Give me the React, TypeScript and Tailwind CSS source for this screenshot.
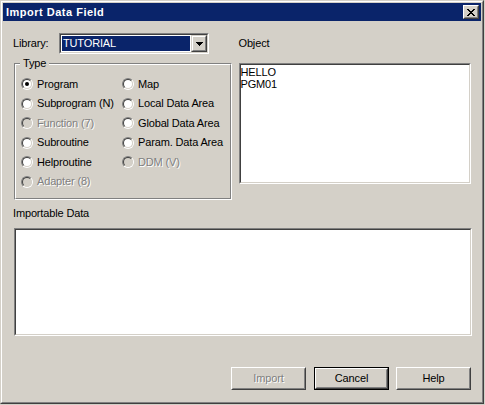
import React from 'react'

const raisedOuter = 'border border-t-white border-l-white border-r-[#404040] border-b-[#404040]'
const raisedInner = 'border border-t-[#d4d0c8] border-l-[#d4d0c8] border-r-[#808080] border-b-[#808080]'
const sunkenOuter = 'border border-t-[#808080] border-l-[#808080] border-r-white border-b-white'
const sunkenInner = 'border border-t-[#404040] border-l-[#404040] border-r-[#d4d0c8] border-b-[#d4d0c8]'
const disabledText = 'text-[#808080] [text-shadow:1px_1px_0_#ffffff]'

function Radio({ label, checked, disabled }: { label?: string; checked?: boolean; disabled?: boolean }) {
  if (!label) return <div />
  return (
    <div className="flex items-center gap-[4px]">
      <span className={`w-[12px] h-[12px] rounded-full flex ${sunkenOuter}`}>
        <span
          className={`w-full h-full rounded-full flex items-center justify-center ${sunkenInner} ${
            disabled ? 'bg-[#d4d0c8]' : 'bg-white'
          }`}
        >
          {checked && <span className="w-[4px] h-[4px] rounded-full bg-black" />}
        </span>
      </span>
      <span className={disabled ? disabledText : ''}>{label}</span>
    </div>
  )
}

function Button({ label, disabled, isDefault, className }: { label: string; disabled?: boolean; isDefault?: boolean; className?: string }) {
  if (isDefault) {
    return (
      <div className={`w-[75px] h-[23px] border border-black ${className ?? ''}`}>
        <div className={`h-full ${raisedOuter}`}>
          <div className={`h-full flex items-center justify-center ${raisedInner}`}>{label}</div>
        </div>
      </div>
    )
  }
  return (
    <div className={`w-[75px] h-[23px] ${raisedOuter} ${className ?? ''}`}>
      <div className={`h-full flex items-center justify-center ${raisedInner}`}>
        <span className={disabled ? disabledText : ''}>{label}</span>
      </div>
    </div>
  )
}

const CloseGlyph = () => (
  <svg width="8" height="7" viewBox="0 0 8 7" shapeRendering="crispEdges">
    <path
      fill="#000"
      d="M0 0h2v1H0zM6 0h2v1H6zM1 1h2v1H1zM5 1h2v1H5zM2 2h4v1H2zM3 3h2v1H3zM2 4h4v1H2zM1 5h2v1H1zM5 5h2v1H5zM0 6h2v1H0zM6 6h2v1H6z"
    />
  </svg>
)

const ArrowGlyph = () => (
  <svg width="7" height="4" viewBox="0 0 7 4" shapeRendering="crispEdges">
    <path fill="#000" d="M0 0h7v1H0zM1 1h5v1H1zM2 2h3v1H2zM3 3h1v1H3z" />
  </svg>
)

const tipos = [
  ['Program', 'Map'],
  ['Subprogram (N)', 'Local Data Area'],
  ['Function (7)', 'Global Data Area'],
  ['Subroutine', 'Param. Data Area'],
  ['Helproutine', 'DDM (V)'],
  ['Adapter (8)', ''],
]
const deshabilitados = ['Function (7)', 'DDM (V)', 'Adapter (8)']

export default function App() {
  return (
    <div className="w-[485px] h-[405px] bg-[#d4d0c8] text-black text-[11px] tracking-[-0.15px] font-['Liberation_Sans',Arial,sans-serif]">
      <div className="w-[484px] h-[404px] border border-t-[#d4d0c8] border-l-[#d4d0c8] border-r-[#404040] border-b-[#404040]">
        <div className="h-full border border-t-white border-l-white border-r-[#808080] border-b-[#808080] p-px flex flex-col">
          {/* title bar */}
          <div className="h-[18px] bg-[#0a246a] flex items-center justify-between pl-[3px] pr-[2px]">
            <span className="text-white font-bold tracking-[0.5px]">Import Data Field</span>
            <div className={`w-[16px] h-[14px] bg-[#d4d0c8] ${raisedOuter}`}>
              <div className={`h-full flex items-center justify-center pr-px ${raisedInner}`}>
                <CloseGlyph />
              </div>
            </div>
          </div>

          <div className="flex-1 pl-[10px] pr-[10px] pt-[12px]">
            <div className="flex">
              <div className="w-[226px]">
                <div className="h-[21px] flex items-center">
                  <span className="w-[46px]">Library:</span>
                  <div className={`w-[150px] h-[21px] ${sunkenOuter}`}>
                    <div className={`h-full flex bg-white ${sunkenInner}`}>
                      <div className="flex-1 p-px">
                        <div className="h-full bg-[#0a246a] text-white flex items-center pl-px">TUTORIAL</div>
                      </div>
                      <div className="w-[16px] h-full border border-t-[#d4d0c8] border-l-[#d4d0c8] border-r-[#404040] border-b-[#404040] bg-[#d4d0c8]">
                        <div className="h-full flex items-center justify-center border border-t-white border-l-white border-r-[#808080] border-b-[#808080]">
                          <ArrowGlyph />
                        </div>
                      </div>
                    </div>
                  </div>
                </div>

                <div className="relative mt-[9px] ml-px w-[218px] h-[137px] border border-t-[#808080] border-l-[#808080] border-r-white border-b-white">
                  <div className="h-full border border-t-white border-l-white border-r-[#808080] border-b-[#808080] pt-[9px] pl-[5px]">
                    <div className="grid grid-cols-[101px_1fr] grid-rows-[20px_19px_20px_19px_20px_19px]">
                      {tipos.map((fila) =>
                        fila.map((t, i) => (
                          <Radio key={t || 'vacio' + i} label={t} checked={t === 'Program'} disabled={deshabilitados.includes(t)} />
                        ))
                      )}
                    </div>
                  </div>
                  <span className="absolute top-[-7px] left-[5px] px-[3px] leading-[13px] bg-[#d4d0c8]">Type</span>
                </div>
              </div>

              <div className="w-[233px]">
                <div className="h-[21px] flex items-center">Object</div>
                <div className={`mt-[9px] h-[121px] ${sunkenOuter}`}>
                  <div className={`h-full bg-white pt-px ${sunkenInner}`}>
                    <div className="leading-[12px]">HELLO</div>
                    <div className="leading-[12px]">PGM01</div>
                  </div>
                </div>
              </div>
            </div>

            <div className="mt-[7px] h-[13px] leading-[13px]">Importable Data</div>
            <div className={`mt-[8px] ml-px w-[458px] h-[108px] ${sunkenOuter}`}>
              <div className={`h-full bg-white ${sunkenInner}`} />
            </div>

            <div className="mt-[31px] flex justify-end">
              <Button label="Import" disabled />
              <Button label="Cancel" isDefault className="ml-[8px]" />
              <Button label="Help" className="ml-[7px]" />
            </div>
          </div>
        </div>
      </div>
    </div>
  )
}
